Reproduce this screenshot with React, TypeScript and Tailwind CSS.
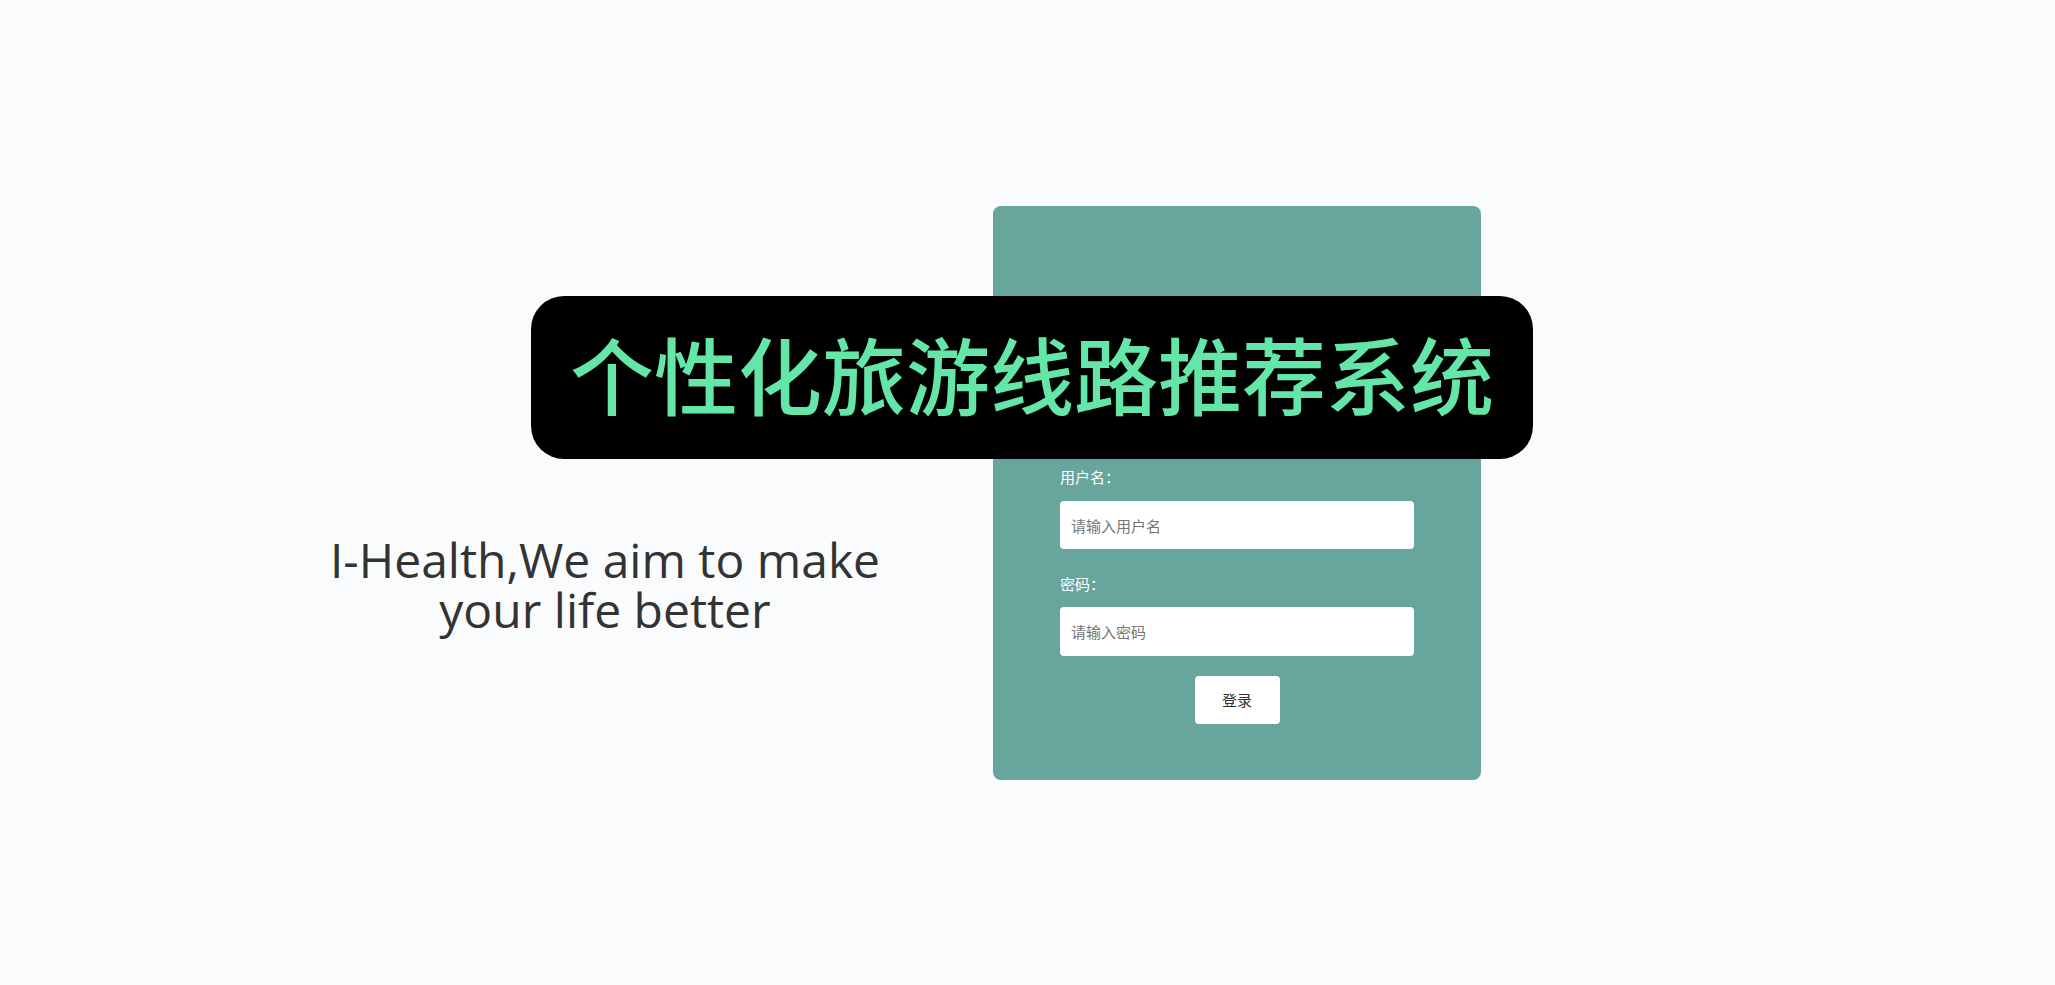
import React from "react";

export default function App() {
  return (
    <div className="relative w-full h-[985px] bg-[#f9fbfd] overflow-hidden font-['Noto_Sans','Noto_Sans_CJK_SC',sans-serif]">
      <div className="flex items-start pl-[322px] pt-[206px]">
        <div className="w-[566px] mt-[329px] flex flex-col items-center text-[48px] leading-[50px] text-[#333333] font-['Open_Sans',sans-serif]">
          <div>I-Health,We aim to make</div>
          <div>your life better</div>
        </div>
        <div className="ml-[105px] w-[488px] h-[574px] rounded-[8px] bg-[#67a59d] pt-[261px] px-[67px] flex flex-col font-['Noto_Sans_CJK_SC',sans-serif]">
          <label className="text-[15px] leading-[20px] text-white mb-[14px]">用户名：</label>
          <input
            className="h-[48px] w-full rounded-[4px] bg-white px-[11px] text-[15px] text-[#333] placeholder:text-[#757575] outline-none"
            placeholder="请输入用户名"
          />
          <label className="mt-[25px] text-[15px] leading-[20px] text-white mb-[13px]">密码：</label>
          <input
            type="password"
            className="h-[49px] w-full rounded-[4px] bg-white px-[11px] text-[15px] text-[#333] placeholder:text-[#757575] outline-none"
            placeholder="请输入密码"
          />
          <div className="mt-[20px] flex justify-center">
            <button className="w-[85px] h-[48px] rounded-[4px] bg-white text-[15px] text-[#333]">登录</button>
          </div>
        </div>
      </div>
      <div className="absolute left-[531px] top-[296px] w-[1002px] h-[163px] rounded-[33px] bg-black flex items-center justify-center pb-[10px]">
        <span className="text-[84px] leading-none font-medium text-[#63e6a8] font-['Noto_Sans_CJK_SC',sans-serif]">
          个性化旅游线路推荐系统
        </span>
      </div>
    </div>
  );
}
